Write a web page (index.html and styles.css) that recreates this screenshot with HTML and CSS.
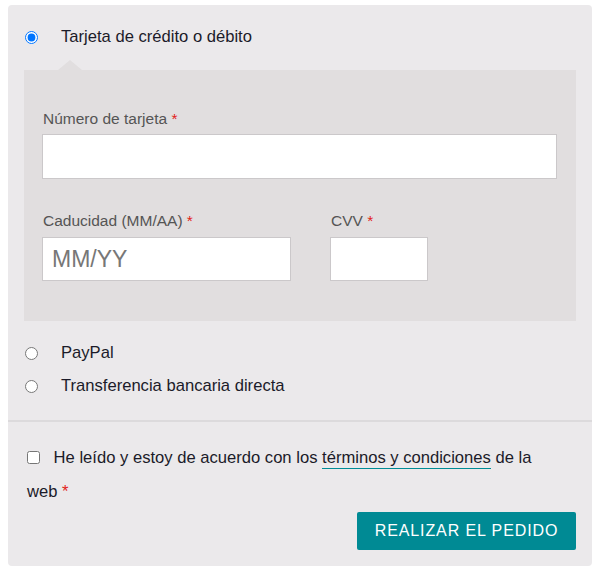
FILE: index.html
```html
<!DOCTYPE html>
<html lang="es">
<head>
	<meta charset="UTF-8">
	<meta name="viewport" content="width=device-width, initial-scale=1.0">
	<title>Pago</title>
	<link rel="stylesheet" href="styles.css">
</head>
<body>
	<div id="payment">
		<ul class="pay-methods">
			<li class="pay-method">
				<label class="pay-row"><input type="radio" name="pm" checked> Tarjeta de crédito o débito</label>
				<div class="pay-box">
					<div class="field">
						<label>Número de tarjeta <span class="req">*</span></label>
						<input type="text" class="txt">
					</div>
					<div class="field-row">
						<div class="field exp">
							<label>Caducidad (MM/AA) <span class="req">*</span></label>
							<input type="text" class="txt big" placeholder="MM/YY">
						</div>
						<div class="field cvv">
							<label>CVV <span class="req">*</span></label>
							<input type="text" class="txt">
						</div>
					</div>
				</div>
			</li>
			<li class="pay-method">
				<label class="pay-row"><input type="radio" name="pm"> PayPal</label>
			</li>
			<li class="pay-method">
				<label class="pay-row"><input type="radio" name="pm"> Transferencia bancaria directa</label>
			</li>
		</ul>
		<div class="place-order">
			<p class="terms">
				<input type="checkbox"> He leído y estoy de acuerdo con los <a href="#">términos y condiciones</a> de la web <span class="req">*</span>
			</p>
			<div class="actions">
				<button type="button" class="btn">REALIZAR EL PEDIDO</button>
			</div>
		</div>
	</div>
</body>
</html>
```

FILE: styles.css
```css
body {
  margin: 0;
  background: #fff;
  font-family: "Liberation Sans", Arial, sans-serif;
  color: #1b1b29;
}

#payment {
  margin: 5px 8px 0;
  width: 584px;
  height: 561px;
  background: #ebe9eb;
  border-radius: 4px;
  box-sizing: border-box;
}

.pay-methods {
  list-style: none;
  margin: 0;
  padding: 20px 16px 22px;
  border-bottom: 2px solid #dcdadc;
}

.pay-method + .pay-method {
  margin-top: 9px;
}
.pay-method:nth-child(2) {
  margin-top: 20px;
}

.pay-row {
  display: flex;
  align-items: center;
  height: 24px;
  font-size: 16.6px;
}
.pay-row input {
  margin: 0 23px 0 1px;
  width: 13px;
  height: 13px;
}

.pay-box {
  position: relative;
  margin-top: 21px;
  background: #e1dedf;
  padding: 39px 19px 40px 18px;
  height: 251px;
  box-sizing: border-box;
}
.pay-box::before {
  content: "";
  position: absolute;
  top: -10px;
  left: 34px;
  border: 12px solid transparent;
  border-top: 0;
  border-bottom: 10px solid #e1dedf;
}

.field label {
  display: block;
  font-size: 15.5px;
  line-height: 20px;
  color: #555;
  padding-left: 1px;
}
.field .txt {
  display: block;
  width: 100%;
  box-sizing: border-box;
  height: 45px;
  margin-top: 5px;
  border: 1px solid #cbc8ca;
  background: #fff;
  padding: 0 9px;
  font-family: inherit;
  font-size: 16px;
}
.field .txt.big {
  font-size: 23px;
}
.field .txt.big::placeholder {
  color: #777;
}

.field-row {
  display: flex;
  gap: 39px;
  margin-top: 32px;
}
.field-row .txt {
  height: 44px;
  margin-top: 6px;
}
.exp {
  width: 249px;
}
.cvv {
  width: 98px;
}

.req {
  color: #e2231a;
}

.place-order {
  padding: 19px 16px 0 19px;
}

.terms {
  margin: 0;
  padding-right: 24px;
  font-size: 16.6px;
  line-height: 34px;
}
.terms input {
  margin: 0 9px 0 0;
  width: 13px;
  height: 13px;
  vertical-align: -1px;
}
.terms a {
  color: inherit;
  text-decoration: none;
  border-bottom: 1px solid #008c96;
  padding-bottom: 1px;
}

.actions {
  display: flex;
  justify-content: flex-end;
  margin-top: 3px;
}

.btn {
  width: 219px;
  height: 38px;
  background: #008a94;
  color: #fff;
  border: 0;
  border-radius: 2px;
  font-family: inherit;
  font-size: 16px;
  letter-spacing: 0.9px;
}
```
